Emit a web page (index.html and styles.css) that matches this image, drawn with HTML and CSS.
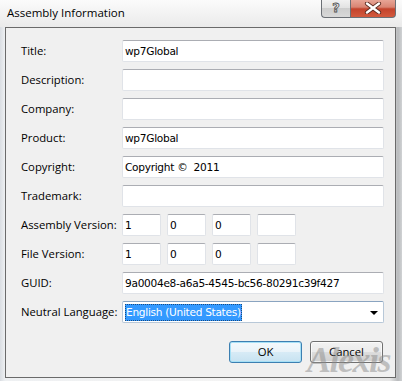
FILE: index.html
```html
<!DOCTYPE html>
<html>
<head>
<meta charset="utf-8">
<link rel="stylesheet" href="styles.css">
</head>
<body>
<div class="window">
  <div class="titlebar">
    <span class="title">Assembly Information</span>
    <div class="caption-btns">
      <div class="cap help"><span>?</span></div>
      <div class="cap close">
        <svg width="18" height="12" viewBox="0 0 18 12">
          <path d="M3 1.5 L15 10.5 M15 1.5 L3 10.5" stroke="#5a2a20" stroke-width="4.2" stroke-linecap="round"/>
          <path d="M3 1.5 L15 10.5 M15 1.5 L3 10.5" stroke="#ffffff" stroke-width="2.4" stroke-linecap="round"/>
        </svg>
      </div>
    </div>
  </div>
  <div class="client">
    <div class="form">
      <label>Title:</label><div class="tb">wp7Global</div>
      <label>Description:</label><div class="tb"></div>
      <label>Company:</label><div class="tb"></div>
      <label>Product:</label><div class="tb">wp7Global</div>
      <label>Copyright:</label><div class="tb">Copyright ©&nbsp; 2011</div>
      <label>Trademark:</label><div class="tb"></div>
      <label>Assembly Version:</label>
      <div class="ver"><div class="tb">1</div><div class="tb">0</div><div class="tb">0</div><div class="tb"></div></div>
      <label>File Version:</label>
      <div class="ver"><div class="tb">1</div><div class="tb">0</div><div class="tb">0</div><div class="tb"></div></div>
      <label>GUID:</label><div class="tb">9a0004e8-a6a5-4545-bc56-80291c39f427</div>
      <label>Neutral Language:</label>
      <div class="tb combo"><span class="sel">English (United States)</span><span class="arrow"></span></div>
    </div>
    <div class="buttons">
      <div class="btn default">OK</div>
      <div class="btn">Cancel</div>
    </div>
    <div class="watermark">Alexis</div>
  </div>
</div>
</body>
</html>
```
FILE: styles.css
```css
* { box-sizing: border-box; }
html, body { margin: 0; padding: 0; }
body {
  width: 402px;
  height: 381px;
  overflow: hidden;
  font-family: "Open Sans", "DejaVu Sans", sans-serif;
}
.window {
  width: 402px;
  height: 381px;
  background: linear-gradient(90deg, #d9dde2 0px, #eef0f2 5px, #f4f4f4 60%, #e6e6e6 97%, #b9bbbd 99%, #d0d2d4 100%);
  display: flex;
  flex-direction: column;
  padding: 0 6px 3px 5px;
}
.titlebar {
  height: 27px;
  display: flex;
  align-items: flex-start;
  justify-content: space-between;
  margin: 0 -6px 0 -5px;
  padding: 0 6px 0 7px;
  background: linear-gradient(180deg, #fbfbfb 0%, #f1f1f1 60%, #eaeaea 100%);
}
.title {
  font-size: 11.5px;
  color: #000;
  margin-top: 5px;
}
.caption-btns {
  display: flex;
  margin-top: -1px;
}
.cap {
  height: 19px;
  border: 1px solid #6b6f75;
  border-top: none;
  display: flex;
  align-items: center;
  justify-content: center;
}
.help {
  width: 29px;
  border-radius: 0 0 0 4px;
  border-right: none;
  background: linear-gradient(180deg, #f3f3f3 0%, #e2e2e2 50%, #cdcdcd 51%, #d9d9d9 100%);
}
.help span {
  font-family: "DejaVu Sans", sans-serif;
  font-size: 13px;
  font-weight: bold;
  color: #e8e8e8;
  -webkit-text-stroke: 0.8px #505050;
  margin-top: -1px;
}
.close {
  width: 46px;
  border-radius: 0 0 4px 0;
  background: linear-gradient(180deg, #e9a99b 0%, #d98573 45%, #c3432c 55%, #d35a3e 100%);
}
.close svg { margin-top: -1px; }
.client {
  position: relative;
  flex: 1;
  background: #f0f0f0;
  border: 1px solid #6a6a6a;
  padding: 12px 0 0 15px;
  display: flex;
  flex-direction: column;
}
.form {
  display: grid;
  grid-template-columns: 101px 262px;
  row-gap: 7px;
  align-items: center;
}
label {
  font-size: 11.3px;
  color: #000;
  line-height: 22px;
  white-space: nowrap;
}
.tb {
  height: 22px;
  background: #fff;
  border: 1px solid #e0e3e8;
  border-top-color: #abadb3;
  border-radius: 2px;
  font-family: "DejaVu Sans", sans-serif;
  font-size: 10.6px;
  letter-spacing: -0.3px;
  line-height: 20px;
  padding-left: 2px;
  color: #000;
  white-space: nowrap;
  overflow: hidden;
}
.ver {
  display: flex;
  gap: 6px;
}
.ver .tb { width: 39px; }
.combo {
  display: flex;
  align-items: center;
  justify-content: space-between;
  border-color: #b8c8d8;
  border-top-color: #8aa4c0;
  padding-right: 5px;
}
.sel {
  background: #3399ff;
  color: #fff;
  line-height: 17px;
  padding: 0 1px;
  outline: 1px dotted #1a4b80;
  outline-offset: -1px;
}
.arrow {
  width: 0;
  height: 0;
  border-left: 4px solid transparent;
  border-right: 4px solid transparent;
  border-top: 4px solid #000;
  margin-top: 1px;
}
.buttons {
  display: flex;
  justify-content: flex-end;
  gap: 8px;
  margin-top: 18px;
  padding-right: 12px;
}
.btn {
  width: 73px;
  height: 22px;
  border: 1px solid #707070;
  border-radius: 3px;
  background: linear-gradient(180deg, #f2f2f2 0%, #ebebeb 50%, #dddddd 51%, #cfcfcf 100%);
  font-size: 11.3px;
  line-height: 20px;
  text-align: center;
  color: #000;
  box-shadow: inset 0 0 0 1px rgba(255,255,255,0.7);
}
.btn.default {
  border-color: #3c7fb1;
  background: linear-gradient(180deg, #f4f9fc 0%, #e9f3f9 50%, #d7ebf6 51%, #c7e2f1 100%);
  box-shadow: inset 0 0 0 1px #a6e0f6;
}
.watermark {
  position: absolute;
  right: 5px;
  bottom: 0;
  font-family: "Liberation Serif", serif;
  font-style: italic;
  font-weight: bold;
  font-size: 36px;
  line-height: 34px;
  color: rgba(140,140,140,0.5);
  letter-spacing: -1.5px;
  pointer-events: none;
}
```
